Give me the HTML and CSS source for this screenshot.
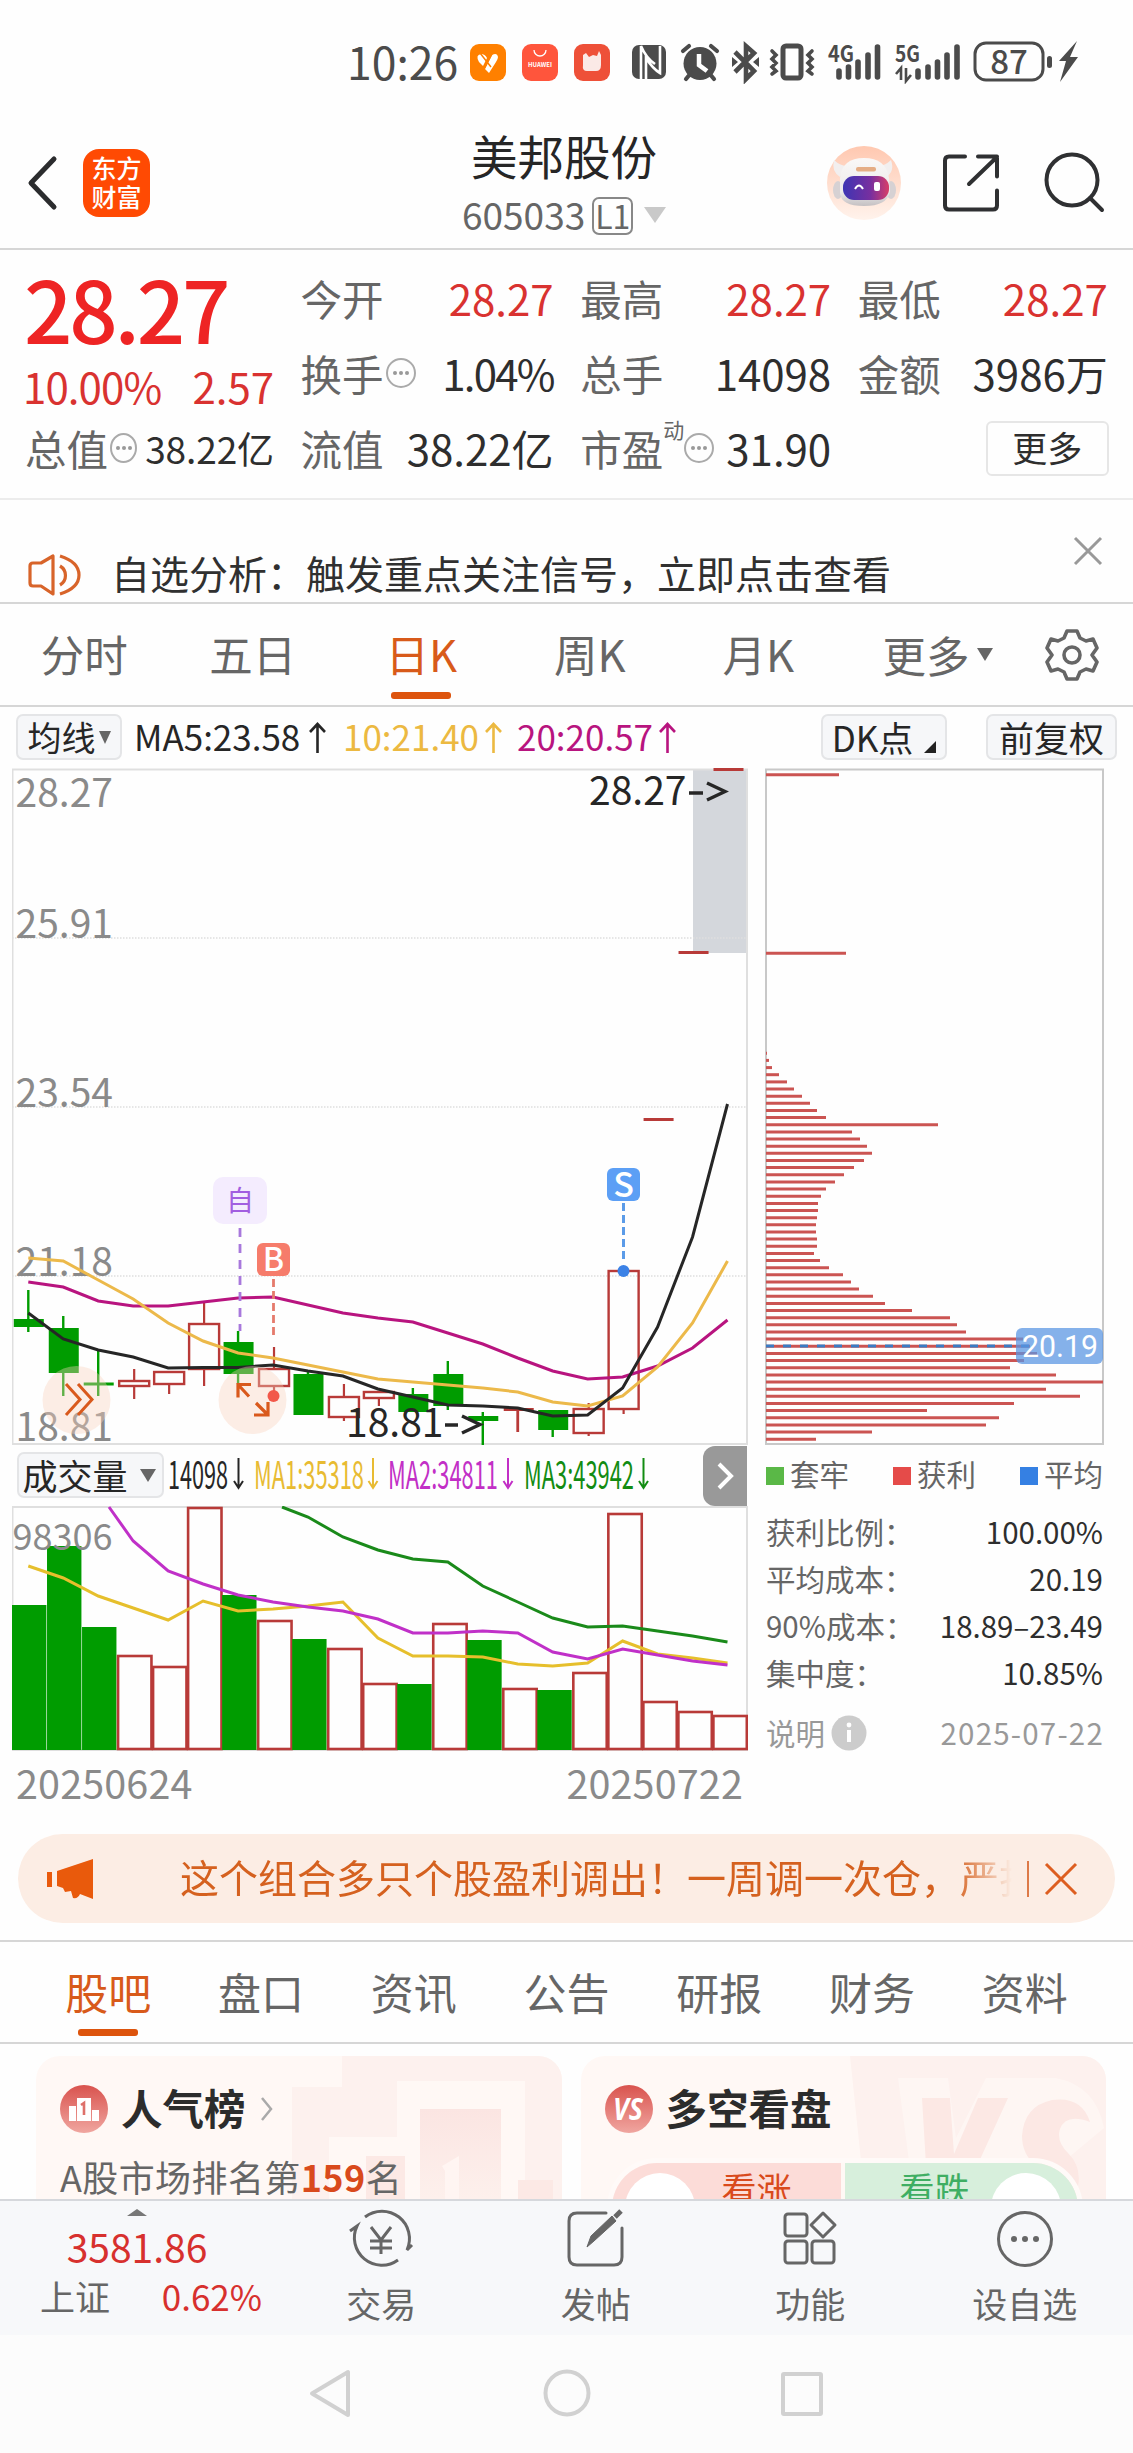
FILE: index.html
```html
<!DOCTYPE html>
<html lang="zh-CN">
<head>
<meta charset="utf-8">
<title>美邦股份 605033</title>
<link rel="stylesheet" href="styles.css">
</head>
<body>
<div class="status">
  <span class="clock">10:26</span>
  <svg class="apps" width="140" height="38" viewBox="470 44 140 38">
    <rect x="470" y="44" width="36" height="37" rx="9" fill="#ff8000"/>
    <path d="M479 62q-4-7 2-8 4 0 6 4l-4 8zM485 69l7-14q5-3 6 2 0 2-2 5l-7 11z" fill="#fff"/>
    <path d="M480 53l11 14M484 69l8-15" stroke="#ff8000" stroke-width="1.500"/>
    <rect x="522" y="44" width="36" height="37" rx="9" fill="#ff553c"/>
    <path d="M534 50a6 6 0 0 0 12 0" fill="none" stroke="#fff" stroke-width="1.3"/>
    <text x="540" y="67" font-size="6" font-weight="700" fill="#fff" text-anchor="middle">HUAWEI</text>
    <rect x="574" y="44" width="36" height="37" rx="9" fill="#ee5038"/>
    <path d="M583 55l3-2 3 4 4-2 4 1 2-5 2 4v10q0 6-5 6h-9q-5 0-4-6z" fill="#fbe9e6"/>
  </svg>
  <svg class="sys" width="450" height="44" viewBox="630 40 450 44" fill="#4b4b4b">
    <rect x="632" y="45" width="34" height="34" rx="7"/>
    <path d="M641 79V46q5 12 14 18M646 79V58q7 11 14 15V46" stroke="#fff" stroke-width="2.6" fill="none"/>
    <circle cx="700" cy="63.5" r="16.5"/><path d="M699 54v11l8 6" stroke="#fff" stroke-width="4.5" fill="none"/>
    <path d="M683 51l6-5M717 51l-6-5M686 79l5-6M714 79l-5-6" stroke="#4b4b4b" stroke-width="4.2" stroke-linecap="round"/>
    <path d="M735 52l19 19-8 8V46l8 7-19 19" fill="none" stroke="#4b4b4b" stroke-width="4.6"/><path d="M732 57l6 5-6 5zM759 57l-6 5 6 5z"/>
    <rect x="783" y="46" width="18" height="32" rx="3" fill="none" stroke="#4b4b4b" stroke-width="5"/>
    <path d="M772 51l4 4-4 4 4 4-4 4 4 4-4 3M812 51l-4 4 4 4-4 4 4 4-4 4 4 3" fill="none" stroke="#4b4b4b" stroke-width="3.6" stroke-linecap="round"/>
    <text x="828" y="62" font-size="23" font-weight="700" textLength="26" lengthAdjust="spacingAndGlyphs">4G</text>
    <path d="M839 71v6M848.500 67v10M858 62v15M868 55v22M877.500 47v30M918 71v6M928 67v10M937.500 62v15M947 55v22M957 47v30" stroke="#4b4b4b" stroke-width="5.600" stroke-linecap="round"/>
    <text x="895" y="62" font-size="23" font-weight="700" textLength="25" lengthAdjust="spacingAndGlyphs">5G</text>
    <path d="M896 74l5-6v12M911 75l-5 6V68" stroke="#4b4b4b" stroke-width="2.600" fill="none"/>
    <rect x="975" y="43" width="68" height="37" rx="11" fill="none" stroke="#4b4b4b" stroke-width="3"/>
    <text x="1009" y="74" font-size="33" font-weight="500" text-anchor="middle">87</text>
    <rect x="1047" y="56" width="5" height="12" rx="2.500"/>
    <path d="M1077 41l-18 20h7l-6 21 18-25h-8z"/>
  </svg>
</div>

<header class="head">
  <svg class="back" width="34" height="56" viewBox="0 0 34 56"><path d="M29 4L6 28l23 24" fill="none" stroke="#2b2c2e" stroke-width="5" stroke-linecap="round" stroke-linejoin="round"/></svg>
  <div class="logo"><span>东方</span><span>财富</span></div>
  <div class="title">
    <div class="name">美邦股份</div>
    <div class="code">605033<span class="lv">L1</span><i class="tri-lg"></i></div>
  </div>
  <svg class="bot" width="76" height="76" viewBox="826 145 76 76">
    <defs>
      <linearGradient id="halo" x1="0" y1="0" x2="0" y2="1"><stop offset="0" stop-color="#ffc8b0"/><stop offset="1" stop-color="#fff3ec"/></linearGradient>
      <linearGradient id="visor"><stop offset="0" stop-color="#3d35b4"/><stop offset=".6" stop-color="#782f9f"/><stop offset="1" stop-color="#d83e68"/></linearGradient>
      <linearGradient id="shell" x1="0" y1="0" x2="0" y2="1"><stop offset="0" stop-color="#faf8f7"/><stop offset=".7" stop-color="#eceaea"/><stop offset="1" stop-color="#c4c0c2"/></linearGradient>
    </defs>
    <circle cx="864" cy="183" r="37" fill="url(#halo)"/>
    <path d="M840 177q-9-6-6-17 6 6 14 6zM886 177q9-5 5-17-6 6-13 6z" fill="#f2efef"/>
    <ellipse cx="838" cy="190" rx="5" ry="9" fill="#d6d1d3"/><ellipse cx="891" cy="190" rx="5" ry="9" fill="#d6d1d3"/>
    <path d="M840 178q2-20 24-20t25 20l1 14q-3 14-26 14t-24-13z" fill="url(#shell)"/>
    <rect x="856" y="167" width="20" height="4.500" rx="2" fill="#e5ad85"/>
    <rect x="843" y="176" width="46" height="24" rx="11" fill="url(#visor)"/>
    <path d="M855 189q4-7 8 0" fill="none" stroke="#fff" stroke-width="2"/><rect x="874" y="182" width="6" height="9" rx="2" fill="#fff"/>
  </svg>
  <svg class="share" width="62" height="62" viewBox="941 151 62 62"><path d="M965 156.500h-16q-4 0-4 4v45q0 4 4 4h44q4 0 4-4v-15M978 156.500h19v20M997 157l-28 27" fill="none" stroke="#2f3032" stroke-width="4" stroke-linecap="round" stroke-linejoin="round"/></svg>
  <svg class="search" width="62" height="62" viewBox="1043 151 62 62"><circle cx="1072" cy="180" r="25.500" fill="none" stroke="#2f3032" stroke-width="4"/><path d="M1090 198l12 12" stroke="#2f3032" stroke-width="4" stroke-linecap="round"/></svg>
</header>

<section class="quote">
  <div class="main-q">
    <div class="price">28.27</div>
    <div class="chg"><span>10.00%</span><span>2.57</span></div>
    <div class="cap"><span class="lab">总值</span><i class="more-dot"></i><span class="capv">38.22亿</span></div>
  </div>
  <div class="col">
    <div class="q"><span class="lab">今开</span><b class="red">28.27</b></div>
    <div class="q"><span class="lab">换手<i class="more-dot"></i></span><b class="pct">1.04%</b></div>
    <div class="q"><span class="lab">流值</span><b>38.22亿</b></div>
  </div>
  <div class="col">
    <div class="q"><span class="lab">最高</span><b class="red">28.27</b></div>
    <div class="q"><span class="lab">总手</span><b>14098</b></div>
    <div class="q"><span class="lab">市盈<sup class="sup">动</sup><i class="more-dot"></i></span><b>31.90</b></div>
  </div>
  <div class="col">
    <div class="q"><span class="lab">最低</span><b class="red">28.27</b></div>
    <div class="q"><span class="lab">金额</span><b>3986万</b></div>
    <div class="q end"><span class="morebtn">更多</span></div>
  </div>
</section>

<section class="notice">
  <svg class="horn" width="54" height="46" viewBox="28 552 54 46"><path d="M53 556v38l-12-8h-8q-3 0-3-3v-17q0-3 3-3h8zM60 566a11 11 0 0 1 0 19M60 556q19 6 19 19t-19 19" fill="none" stroke="#d8642a" stroke-width="3.200" stroke-linejoin="round"/></svg>
  <span class="ntext">自选分析：触发重点关注信号，立即点击查看</span>
  <svg class="nclose" width="30" height="30" viewBox="0 0 30 30"><path d="M2 2l26 26M28 2L2 28" stroke="#999" stroke-width="3"/></svg>
</section>

<nav class="tabs">
  <span>分时</span><span>五日</span><span class="on">日K</span><span>周K</span><span>月K</span><span class="tmore">更多<i class="tri-sm"></i></span>
  <svg class="gear" width="54" height="56" viewBox="-27 -28 54 56" fill="none" stroke="#666" stroke-width="3.600" stroke-linejoin="round"><path d="M-5-24h10l3 7 6 3 7-2 4 9-5 7 5 7-4 9-7-2-6 3-3 7h-10l-3-7-6-3-7 2-4-9 5-7-5-7 4-9 7 2 6-3z"/><circle r="8"/></svg>
</nav>

<div class="marow">
  <span class="pill p1">均线<i class="tri-sm"></i></span>
  <span class="ma m5">MA5:23.58<svg width="19" height="34" viewBox="0 0 19 34"><path d="M9.500 32V3M2 11l7.500-8 7.500 8"/></svg></span>
  <span class="ma m10">10:21.40<svg width="19" height="34" viewBox="0 0 19 34"><path d="M9.500 32V3M2 11l7.500-8 7.500 8"/></svg></span>
  <span class="ma m20">20:20.57<svg width="19" height="34" viewBox="0 0 19 34"><path d="M9.500 32V3M2 11l7.500-8 7.500 8"/></svg></span>
  <span class="pill p2">DK点<i class="corner"></i></span>
  <span class="pill p3">前复权</span>
</div>

<section class="charts">
  <div class="left">
    <svg id="kline" width="736" height="677" viewBox="12 768 736 677">
      <rect x="693" y="769" width="54" height="184" fill="#d4d7dc"/>
      <path d="M12 938H747M12 1107H747M12 1276H747" stroke="#dedede" stroke-width="1.500" stroke-dasharray="1.500 1.500"/>
      <path d="M12.500 769.500H747V1444H12.500z" fill="none" stroke="#dfdfdf" stroke-width="2"/>
      <g id="candles"></g>
      <g class="axis">
        <text x="15.500" y="806.500">28.27</text><text x="15.500" y="938">25.91</text><text x="15.500" y="1107">23.54</text><text x="15.500" y="1276">21.18</text><text x="15.500" y="1441">18.81</text>
      </g>
      <g id="averages"></g>
      <circle cx="76.500" cy="1400" r="34" fill="#fbd3bc" opacity=".38"/>
      <path d="M66 1384l14 15.500-14 15.500M78 1384l14 15.500-14 15.500" fill="none" stroke="#d9591c" stroke-width="3"/>
      <circle cx="252.500" cy="1400" r="34" fill="#fbd3bc" opacity=".38"/>
      <path d="M251 1384.500h-13v13M238 1384.500l11 12M254 1415h14v-13M268 1415l-12-12" fill="none" stroke="#d9591c" stroke-width="3.200"/>
      <rect x="213" y="1177" width="54" height="47" rx="10" fill="#f4ecfe"/>
      <text x="240" y="1211" font-size="28" fill="#a25ee0" text-anchor="middle">自</text>
      <path d="M240 1228v103" stroke="#a878dc" stroke-width="2.800" stroke-dasharray="9 7"/>
      <rect x="257" y="1243" width="33" height="33" rx="6" fill="#f67c6b"/>
      <text x="273.500" y="1271" font-size="32" font-weight="500" fill="#fff" text-anchor="middle">B</text>
      <path d="M273.500 1279v58" stroke="#e57a6c" stroke-width="2.800" stroke-dasharray="8 4"/>
      <circle cx="273.500" cy="1396" r="6" fill="#f2584a"/>
      <rect x="607" y="1168" width="33" height="33" rx="6" fill="#5c9ff5"/>
      <text x="623.500" y="1197" font-size="34" font-weight="500" fill="#fff" text-anchor="middle">S</text>
      <path d="M623.500 1203v57" stroke="#5b9be8" stroke-width="3" stroke-dasharray="8 4"/>
      <circle cx="623.500" cy="1271" r="6" fill="#3c82e6"/>
      <g class="peak"><text x="589" y="804.500">28.27</text><path d="M689 793h14M707 783l18 8.500-18 8.500"/>
      <text x="346" y="1436.500">18.81</text><path d="M445 1425h13M462 1416l18 8.500-18 8.500"/></g>
    </svg>
    <div class="volhead">
      <span class="pill pv">成交量<i class="tri-sm"></i></span>
      <svg class="volma" width="490" height="60" viewBox="165 1446 490 60">
        <g fill="#262626" stroke="#262626"><text x="168" y="1489" textLength="60">14098</text><path d="M238.500 1458v29M234 1481l4.500 7 4.500-7"/></g>
        <g fill="#e8bb32" stroke="#e8bb32"><text x="254" y="1489" textLength="110">MA1:35318</text><path d="M373 1458v29M368.500 1481l4.500 7 4.500-7"/></g>
        <g fill="#c22fc6" stroke="#c22fc6"><text x="388" y="1489" textLength="110">MA2:34811</text><path d="M508 1458v29M503.500 1481l4.500 7 4.500-7"/></g>
        <g fill="#128c12" stroke="#128c12"><text x="524" y="1489" textLength="110">MA3:43942</text><path d="M643.500 1458v29M639 1481l4.500 7 4.500-7"/></g>
      </svg>
      <span class="next"><svg width="18" height="28" viewBox="0 0 18 28"><path d="M3 2l12 12L3 26" fill="none" stroke="#fff" stroke-width="4"/></svg></span>
    </div>
    <svg id="volume" width="736" height="245" viewBox="12 1506 736 245">
      <path d="M12.500 1507H747V1750H12.500z" fill="none" stroke="#dfdfdf" stroke-width="2"/>
      <g id="bars"></g><g id="volavg"></g>
      <text x="12.500" y="1549.500" font-size="36" fill="#8a8a8a">98306</text>
    </svg>
    <div class="dates"><span>20250624</span><span>20250722</span></div>
  </div>
  <div class="right">
    <svg id="chips" width="340" height="677" viewBox="765 768 340 677">
      <path d="M766 769.500H1103V1444H766z" fill="none" stroke="#c8c8c8" stroke-width="2"/>
      <g id="dist"></g>
      <path d="M766 1346H1030" stroke="#3a7cc4" stroke-width="3" stroke-dasharray="8 9"/>
      <rect x="1016" y="1328" width="87" height="36" rx="6" fill="#5b96e3" opacity=".74"/>
      <text x="1022" y="1357" font-size="31" fill="#fff" textLength="76" lengthAdjust="spacingAndGlyphs" class="tag">20.19</text>
    </svg>
    <div class="legend"><span><i class="sq g"></i>套牢</span><span><i class="sq r"></i>获利</span><span><i class="sq b"></i>平均</span></div>
    <div class="stat"><span>获利比例：</span><b>100.00%</b></div>
    <div class="stat"><span>平均成本：</span><b>20.19</b></div>
    <div class="stat"><span>90%成本：</span><b>18.89–23.49</b></div>
    <div class="stat"><span>集中度：</span><b>10.85%</b></div>
    <div class="stat foot"><span>说明<svg width="36" height="36" viewBox="0 0 36 36"><circle cx="18" cy="18" r="17.500" fill="#ccc"/><circle cx="18" cy="10" r="2.400" fill="#fff"/><path d="M18 15v12" stroke="#fff" stroke-width="4"/></svg></span><b>2025-07-22</b></div>
  </div>
</section>

<div class="banner">
  <svg width="48" height="42" viewBox="46 1857 48 42" fill="#e95a0c"><rect x="47" y="1871" width="5" height="15"/><path d="M57 1870l36-12v40l-13-5q-2 5-7 4l-2-7-6 1-2-4-6-2z"/></svg>
  <span class="btext">这个组合多只个股盈利调出！一周调一次仓，严打</span>
  <i class="bar"></i>
  <svg class="bx" width="34" height="34" viewBox="0 0 34 34"><path d="M2 2l30 30M32 2L2 32" stroke="#dd5e20" stroke-width="3"/></svg>
</div>

<nav class="sub">
  <span class="on">股吧</span><span>盘口</span><span>资讯</span><span>公告</span><span>研报</span><span>财务</span><span>资料</span>
</nav>

<section class="cards">
  <div class="card">
    <svg class="cardbg" width="526" height="143" viewBox="36 2056 526 143">
      <defs><linearGradient id="fade" x1="0" y1="0" x2="0" y2="1"><stop offset="0" stop-color="#fbe5e2"/><stop offset="1" stop-color="#fdf0ec"/></linearGradient></defs>
      <path d="M342 2056h220v143H525v-118h-128v56h-68v62h-37v-112h50z" fill="#fdf1ee"/><rect x="420" y="2109" width="81" height="90" fill="url(#fade)"/><path d="M366 2156h39v43h-39zM518 2180h35v19h-35z" fill="#fce9e5"/>
      <path d="M442 2166l17-10v43h-14v-28z" fill="#fff5f2"/>
    </svg>
    <div class="ch">
      <svg width="48" height="48" viewBox="0 0 48 48"><defs><linearGradient id="disc" x1="0" y1="0" x2="0" y2="1"><stop offset="0" stop-color="#d9534e"/><stop offset="1" stop-color="#f0a6a0"/></linearGradient></defs><circle cx="24" cy="24" r="24" fill="url(#disc)"/><path d="M9 21h7v15H9zM17 13h14v23H17zM32 25h7v11h-7z" fill="#fff"/><path d="M21 20l3-2v12" stroke="#de706a" stroke-width="2.600" fill="none"/></svg>
      <b>人气榜</b><svg class="chev" width="14" height="24" viewBox="0 0 14 24"><path d="M2 1l9 11-9 11" fill="none" stroke="#aaa" stroke-width="2.500"/></svg>
    </div>
    <div class="rank">A股市场排名第<em>159</em>名</div>
  </div>
  <div class="card">
    <svg class="cardbg" width="526" height="143" viewBox="581 2056 526 143">
      <path d="M850 2056h256v143H865z" fill="#fdf1ee"/><path d="M898 2078h50l8 60 30-60h70q40 8 48 50l-60 50-50 21h-80z" fill="#fef6f3"/>
      <path d="M922 2098h28l4 56 24-56h30l-46 101h-34zM1090 2122q-8-26-38-22-28 6-30 36 0 18 14 30 8 14 4 33h34q12-28-6-46-12-12-8-24 6-16 30-7z" fill="#fce8e4"/>
    </svg>
    <div class="ch">
      <svg width="48" height="48" viewBox="0 0 48 48"><circle cx="24" cy="24" r="24" fill="url(#disc)"/><text class="vs" x="23" y="35" font-size="31" font-weight="700" font-style="italic" fill="#fff" text-anchor="middle" textLength="30" lengthAdjust="spacingAndGlyphs">VS</text></svg>
      <b>多空看盘</b>
    </div>
    <div class="vote"><div class="up"><i></i><span>看涨</span></div><div class="down"><span>看跌</span><i></i></div></div>
  </div>
</section>

<footer class="bottom">
  <div class="index"><i class="tri-up"></i><div class="iv">3581.86</div><div class="ir"><span>上证</span><b>0.62%</b></div></div>
  <div class="item"><svg width="66" height="60" viewBox="348 2209 66 60" fill="none" stroke="#666" stroke-width="3"><path d="M365 2217a27.500 27.500 0 0 1 42 33l5-5M398 2260a27.500 27.500 0 0 1-41-34l-7 5M371 2227l10 13 10-13M381 2240v14M370 2241h22M370 2248h22"/></svg>交易</div>
  <div class="item"><svg width="66" height="60" viewBox="563 2209 66 60" fill="none" stroke="#666" stroke-width="3"><path d="M606 2213h-29q-8 0-8 8v36q0 8 8 8h37q8 0 8-8v-29" stroke-linecap="round"/><path d="M587 2247l4-11 21-20 4 5-22 20z" fill="#666" stroke-width="1"/><path d="M615 2217l6-6" stroke-width="5"/></svg>发帖</div>
  <div class="item"><svg width="66" height="60" viewBox="778 2209 66 60" fill="none" stroke="#666" stroke-width="3"><rect x="786" y="2214" width="22" height="22" rx="3"/><rect x="786" y="2241" width="22" height="22" rx="3"/><rect x="813" y="2241" width="22" height="22" rx="3"/><path d="M824 2213l12 12-12 12-12-12z" stroke-linejoin="round"/></svg>功能</div>
  <div class="item"><svg width="66" height="60" viewBox="992 2209 66 60"><circle cx="1025" cy="2239" r="26.500" fill="none" stroke="#666" stroke-width="3"/><g fill="#666"><circle cx="1014" cy="2239" r="3"/><circle cx="1025" cy="2239" r="3"/><circle cx="1036" cy="2239" r="3"/></g></svg>设自选</div>
</footer>
<div class="sysnav">
  <svg width="516" height="52" viewBox="309 2367 516 52" fill="none" stroke="#d1d1d1" stroke-width="4" stroke-linejoin="round"><path d="M348 2372v43l-36-21.500z"/><circle cx="567" cy="2393" r="21.500"/><rect x="783" y="2374" width="38" height="40" rx="1"/></svg>
</div>
<script src="chart.js"></script>
</body>
</html>
```
FILE: styles.css
```css
* { box-sizing: border-box; }
body { margin: 0; width: 1133px; height: 2453px; overflow: hidden; background: #fefefe; color: #2e2e2e; font-family: "Noto Sans CJK SC", sans-serif; }
svg { display: block; flex: none; }
i, em { font-style: normal; }
b { font-weight: 400; }
span, div { white-space: nowrap; }

.status { height: 100px; display: flex; align-items: flex-start; padding-left: 347px; color: #4b4b4b; }
.clock { font-size: 44.500px; line-height: 66px; width: 123px; padding-top: 28px; }
.apps { margin-top: 44px; }
.sys { margin: 40px 0 0 20px; }

.head { height: 150px; border-bottom: 2px solid #d6d6d6; display: flex; align-items: flex-start; }
.back { margin: 55px 0 0 25px; }
.logo { margin: 49px 0 0 24px; width: 67px; height: 68px; border-radius: 16px; background: #ff4a03; color: #fff; font-size: 25px; font-weight: 500; line-height: 29px; padding-top: 4px; display: flex; flex-direction: column; align-items: center; }
.title { width: 330px; margin: 28px 0 0 249px; text-align: center; }
.name { font-size: 46.500px; line-height: 54px; color: #262626; }
.code { height: 63px; display: flex; align-items: center; font-size: 37px; color: #666; padding-left: 63px; }
.lv { width: 41px; height: 38px; border: 2px solid #888; border-radius: 7px; font-size: 32px; line-height: 32px; margin: 5px 0 0 7px; }
.tri-lg { border: 11px solid transparent; border-top: 16px solid #c9c9c9; border-bottom: 0; margin: 3px 0 0 11px; }
.bot { margin: 45px 0 0 97px; }
.share { margin: 51px 0 0 39px; }
.search { margin: 51px 0 0 40px; }

.quote { height: 250px; border-bottom: 2px solid #ececec; padding: 10px 25px 0; display: grid; grid-template-columns: 249px 253px 251px 250px; column-gap: 26.600px; }
.price { font-size: 85px; line-height: 94px; height: 92px; font-weight: 500; letter-spacing: -3.200px; color: #ee2424; margin-left: -1px; }
.chg { display: flex; justify-content: space-between; font-size: 42px; line-height: 67px; height: 65px; color: #d93230; margin-left: -2px; }
.chg span:first-child { letter-spacing: -.9px; }
.cap { display: flex; align-items: center; line-height: 62px; }
.capv { font-size: 37px; color: #2e2e2e; margin-left: 8px; letter-spacing: -.1px; }
.lab { font-size: 41.500px; color: #666; display: flex; align-items: center; }
.q { height: 75px; display: flex; justify-content: space-between; align-items: center; font-size: 42px; }
.q .red { color: #d93230; }
.q .pct { letter-spacing: -1.800px; }
.q.end { justify-content: flex-end; }
.more-dot { width: 30px; height: 30px; border: 2.500px solid #aaa; border-radius: 50%; margin-left: 2px; display: grid; place-items: center; }
.more-dot::before { content: ""; width: 4px; height: 4px; border-radius: 50%; background: #999; box-shadow: -6px 0 #999, 6px 0 #999; }
.sup { font-size: 21px; line-height: 24px; align-self: flex-start; margin-top: -1px; }
.sup + .more-dot { margin-left: 0; }
.morebtn { width: 123px; height: 55px; border: 2px solid #e6e6e6; border-radius: 6px; font-size: 35px; line-height: 47px; text-align: center; margin: 1px -1px 0 0; }

.notice { height: 104px; border-bottom: 2px solid #d6d6d6; display: flex; align-items: flex-start; padding-left: 28px; }
.horn { margin-top: 52px; }
.ntext { font-size: 39px; line-height: 58px; margin: 43px 0 0 29px; width: 962px; color: #303030; }
.nclose { margin-top: 36px; }

.tabs { height: 103px; border-bottom: 2px solid #d6d6d6; display: flex; font-size: 43.500px; line-height: 99px; color: #666; text-align: center; }
.tabs span { width: 168.500px; }
.tabs .on, .sub .on { color: #d85a1a; position: relative; }
.on::after { content: ""; position: absolute; left: 50%; margin-left: -30px; bottom: 6px; width: 60px; height: 7px; border-radius: 3px; background: #dd540d; }
.tabs .tmore { width: 202px; display: flex; align-items: center; padding-left: 40px; }
.tri-sm { display: inline-block; border: 8px solid transparent; border-top: 13px solid #666; border-bottom: 0; margin-left: 7px; }
.gear { margin: 23px 0 0 0; }

.marow { height: 61px; display: flex; align-items: flex-start; font-size: 35px; line-height: 50px; padding: 4px 0 0 16px; }
.pill { border: 2px solid #e4e5e7; border-radius: 7px; background: #f6f7f9; color: #262626; height: 46px; margin-top: 3px; line-height: 40px; display: flex; align-items: center; justify-content: center; font-size: 35px; flex: none; }
.p1 { width: 106px; font-size: 34px; }
.p1 .tri-sm { margin-left: 3px; border-width: 13px 6.500px 0; }
.p2 { width: 126px; margin-left: 135px; }
.p3 { width: 131px; margin-left: 39px; }
.corner { border-left: 12px solid transparent; border-bottom: 12px solid #222; margin: 20px 0 0 11px; }
.ma { display: flex; align-items: center; }
.ma svg { margin: 4px 0 0 5px; fill: none; stroke: currentColor; stroke-width: 2.600px; }
.m5 { color: #262626; width: 207px; padding-left: 12px; }
.m5 svg { margin-left: 8px; }
.m10 { color: #ecb941; width: 176px; padding-left: 14px; }
.m20 { color: #b8147f; width: 181px; padding-left: 12px; }

.charts { display: flex; padding-left: 12px; height: 1066px; }
.left { width: 753px; }
.axis text { font-size: 39px; fill: #8a8a8a; }
.peak text { font-size: 39px; fill: #262626; }
.peak path { fill: none; stroke: #262626; stroke-width: 3.400px; }
.volhead { height: 61px; width: 735px; display: flex; align-items: flex-start; padding: 0 0 0 5px; }
.pv { width: 147px; margin-top: 7px; gap: 5px; padding-right: 3px; }
.volma { margin: 1px 0 0 1px; font-size: 38px; }
.volma text { stroke: none; }
.volma path { fill: none; stroke-width: 2px; }
.next { width: 44px; height: 60px; margin: 1px 0 0 auto; background: #999; border-radius: 12px 0 0 12px; display: grid; place-items: center; }
.dates { width: 734px; padding: 0 3px 0 4px; display: flex; justify-content: space-between; font-size: 39.500px; line-height: 58px; color: #8a8a8a; margin-top: 2px; letter-spacing: .15px; }
.right { width: 340px; }
.tag { font-family: Roboto, sans-serif; }
.legend { display: flex; justify-content: space-between; padding: 0 2px 0 1px; font-size: 29.500px; line-height: 55px; height: 56px; color: #666; }
.legend span { display: flex; align-items: center; gap: 6px; }
.sq { width: 18px; height: 18px; margin-top: 5px; }
.sq.g { background: #5ab847; } .sq.r { background: #e54b49; } .sq.b { background: #3580e3; }
.stat { display: flex; justify-content: space-between; padding: 0 2px 0 1px; font-size: 29.500px; line-height: 47px; color: #666; }
.legend + .stat { margin-top: 7px; }
.stat b { color: #2e2e2e; }
.foot { color: #999; margin-top: 13px; }
.foot b { color: #999; letter-spacing: 1.200px; margin-right: -1px; }
.foot span { display: flex; align-items: center; gap: 6px; }

.banner { width: 1097px; height: 89px; margin: 0 0 17px 18px; background: #fcede4; border-radius: 45px; display: flex; align-items: center; padding-left: 28px; color: #d5611f; }
.btext { font-size: 39px; line-height: 60px; width: 832px; margin: -6px 0 0 86px; overflow: hidden; -webkit-mask-image: linear-gradient(90deg, #000 93%, transparent 100%); mask-image: linear-gradient(90deg, #000 93%, transparent 100%); }
.bar { width: 2px; height: 36px; background: #dd7a48; margin-left: 15px; }
.bx { margin-left: 15px; }

.sub { height: 104px; border-top: 2px solid #d6d6d6; border-bottom: 2px solid #d6d6d6; padding: 0 32px; display: flex; font-size: 43px; line-height: 98px; color: #666; text-align: center; }
.sub span { flex: 1; }
.sub .on::after { bottom: 6px; }

.cards { height: 155px; padding: 12px 27px 0 36px; display: flex; gap: 19px; overflow: hidden; }
.card { width: 525.500px; height: 180px; border-radius: 24px; background: #fff8f5; overflow: hidden; position: relative; padding: 29px 0 0 24px; flex: none; }
.cardbg { position: absolute; left: 0; top: 0; }
.ch { display: flex; align-items: center; height: 48px; position: relative; }
.ch b { font-size: 41.500px; font-weight: 700; line-height: 48px; margin: -4px 0 0 13px; color: #2c2c2c; }
.chev { margin-left: 14px; }
.rank { font-size: 36px; letter-spacing: .4px; line-height: 50px; margin-top: 18px; position: relative; color: #666; }
.rank em { color: #d94a1c; font-weight: 700; }
.vs { font-family: "Open Sans", sans-serif; }
.vote { display: flex; gap: 4px; margin: 30px 0 0 7px; width: 466px; height: 90px; position: relative; font-size: 35px; line-height: 50px; border-radius: 45px; box-shadow: 0 0 0 5px #fffaf8; overflow: hidden; }
.vote div { flex: 1; display: flex; }
.vote i { width: 70px; height: 70px; border-radius: 50%; background: #fff; margin-top: 10px; }
.up { background: #fcdcd8; color: #d94a1c; padding-left: 13px; gap: 27px; }
.down { background: #d7efdc; color: #3fae63; justify-content: flex-end; padding-right: 17px; gap: 21px; }

.bottom { height: 136px; border-top: 2px solid #d6d8dc; background: #f7f8fa; display: flex; color: #666; font-size: 35px; }
.index { width: 274px; display: flex; flex-direction: column; align-items: center; }
.tri-up { border: 10px solid transparent; border-bottom: 7px solid #777; border-top: 0; margin-top: 8px; }
.iv { font-size: 39px; line-height: 48px; color: #d7302e; margin-top: 6px; }
.ir { align-self: stretch; display: flex; justify-content: space-between; padding: 0 12px 0 40px; line-height: 50px; margin-top: 1px; }
.ir b { color: #d7302e; }
.item { width: 214.500px; display: flex; flex-direction: column; align-items: center; padding-top: 8px; line-height: 50px; }
.item svg { margin-bottom: 9px; }
.sysnav { height: 118px; background: #fcfcfc; padding: 32px 0 0 309px; }
```
FILE: chart.js
```js
const GREEN = '#009c00', RED = '#b83a38';
const STEP = 34.96, X0 = 28.3;
const cx = i => X0 + STEP * i;
const put = (id, html) => { document.getElementById(id).innerHTML = html; };

// [colour, body top, body bottom, wick top, wick bottom]
const candles = [
  ['g',1319,1327,1290,1332],['g',1328,1373,1316,1396],['g',1382.5,1385.5,1350,1396],
  ['r',1381,1386,1369,1399],['r',1372,1384,1372,1394],['r',1324,1369,1302,1386],
  ['g',1342,1374,1331,1384],['r',1369,1386,1347,1396],['g',1374,1415,1372,1415],
  ['r',1397,1417,1384,1421],['r',1392,1398,1392,1406],['g',1394,1412,1388,1412],
  ['g',1374,1406,1361,1410],['g',1416,1421,1412,1445],['r',1409,1410,1409,1432],
  ['g',1410,1430,1410,1437],['r',1409,1433,1403,1436],['r',1271,1409,1271,1414],
  ['r',1119,1120,1119,1120],['r',952,953,952,953],['r',769,770,769,770]
];
put('candles', candles.map(([c, t, b, wt, wb], i) => {
  const x = cx(i);
  if (c === 'g') return `<path d="M${x} ${wt}V${wb}" stroke="${GREEN}" stroke-width="2.4"/><rect x="${x - 14.5}" y="${t}" width="30" height="${b - t}" fill="${GREEN}"/>`;
  if (b - t < 2) return `<path d="M${x - 14} ${t + .5}h30M${x} ${t}V${wb}" stroke="${RED}" stroke-width="2.8"/>`;
  return `<path d="M${x + 1} ${wt}V${t}M${x + 1} ${b}V${wb}" stroke="${RED}" stroke-width="2.2"/><rect x="${x - 14}" y="${t}" width="30" height="${b - t}" fill="none" stroke="${RED}" stroke-width="2.4"/>`;
}).join(''));

const line = (ys, color, first = 0, lead = '') =>
  `<polyline points="${lead} ${ys.map((y, i) => cx(i + first) + ',' + y).join(' ')}" fill="none" stroke="${color}" stroke-width="3"/>`;

put('averages',
  line([1282,1287,1301,1306,1306,1302,1298,1297,1305,1313,1318,1322,1333,1344,1358,1371,1379,1377,1366,1348,1320], '#b8147f') +
  line([1258,1261,1280,1299,1323,1341,1353,1358,1365,1372,1379,1382,1385,1388,1392,1402,1406,1396,1367,1323,1261], '#ecb94a') +
  line([1313,1339,1350,1357,1368,1367.5,1367.5,1365,1371,1376,1389,1397,1405,1406,1408,1416,1415,1388,1327,1237,1104], '#262626'));

const kinds = 'gggrrrgrgrrgrgrgrrrrr';
const tops = [1605,1546,1627,1656,1667,1508,1595,1621,1639,1649,1684,1684,1624,1640,1689,1690,1673,1514,1702,1712,1716];
put('bars', tops.map((t, i) => {
  const x = 12 + i * 35.02;
  return kinds[i] === 'g'
    ? `<rect x="${x}" y="${t}" width="34.4" height="${1750 - t}" fill="${GREEN}"/>`
    : `<rect x="${x + 1}" y="${t}" width="33.4" height="${1749 - t}" fill="none" stroke="${RED}" stroke-width="2.6"/>`;
}).join(''));

put('volavg',
  line([1517,1537,1550,1559,1562,1586,1602,1618,1627,1626,1631,1636,1642], '#1a8a1a', 8, '282,1507') +
  line([1566,1578,1596,1608,1620,1601,1611,1609,1606,1602,1638,1656,1656,1657,1664,1666,1663,1641,1654,1658,1663], '#e6bf2c') +
  line([1541,1571,1584,1595,1602,1607,1611,1619,1633,1633,1631,1633,1652,1659,1649,1655,1661,1665], '#c030c8', 3, '109,1507'));

// chip distribution: one bar length per price row, from the top row down
const chips = [1,3,6,13,21,28,36,44,51,60,172,86,94,101,106,98,88,78,69,60,55,52,52,51,50,50,51,51,48,54,63,77,85,93,107,119,146,184,191,200,257,264,271,258,244,290,337,280,314,248,161,233,220,106,50];
const rows = [[774.7, 73], [953.3, 80], ...chips.map((w, k) => [1053.3 + k * 7.146, w])];
put('dist', rows.map(([y, w]) => `<path d="M766 ${y.toFixed(1)}h${w}" stroke="#cb5452" stroke-width="3"/>`).join(''));

document.querySelectorAll('.volma text').forEach(t => t.setAttribute('lengthAdjust', 'spacingAndGlyphs'));
```
